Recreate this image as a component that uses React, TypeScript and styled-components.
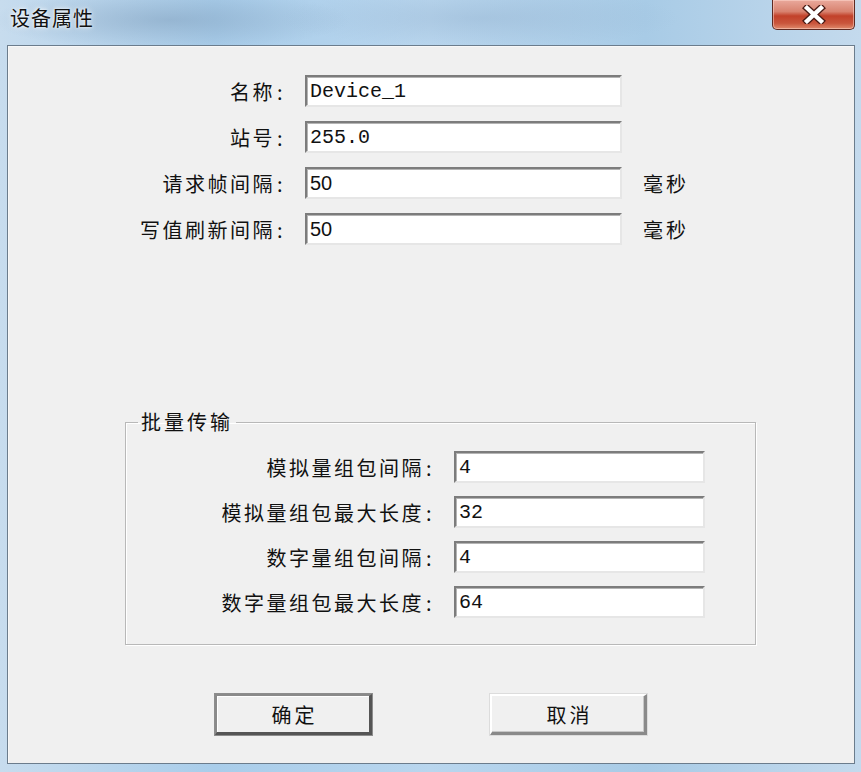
import React from "react";
import styled, { createGlobalStyle } from "styled-components";

const GlobalStyle = createGlobalStyle`
  html, body { margin: 0; padding: 0; }
  body {
    background: #b7d3ea;
    font-family: "Noto Sans CJK SC", "Noto Sans", sans-serif;
  }
`;

const WindowFrame = styled.div`
  width: 861px;
  height: 772px;
  box-sizing: border-box;
  display: flex;
  flex-direction: column;
  padding: 0 6px 8px 7px;
  background:
    radial-gradient(ellipse 180px 30px at 170px 20px, rgba(120, 150, 180, 0.45), transparent),
    radial-gradient(ellipse 200px 30px at 480px 18px, rgba(140, 170, 200, 0.35), transparent),
    linear-gradient(to right, #c7dcee 0%, #a9cdea 25%, #b9d6ee 50%, #a8cbe6 75%, #c4daed 100%);
`;

const TitleBar = styled.div`
  height: 45px;
  display: flex;
  align-items: flex-start;
  justify-content: space-between;
`;

const Title = styled.div`
  margin: 7px 0 0 3px;
  font-size: 20px;
  letter-spacing: 1px;
  line-height: 22px;
  color: #111;
  text-shadow: 0 0 6px rgba(255, 255, 255, 0.9), 0 0 3px rgba(255, 255, 255, 0.9);
`;

const CloseButton = styled.div`
  width: 83px;
  height: 30px;
  box-sizing: border-box;
  border: 1px solid #5e2a22;
  border-top: none;
  border-radius: 0 0 5px 5px;
  background: linear-gradient(to bottom, #e9a99c 0%, #d8826f 40%, #c2412a 55%, #c9553c 80%, #e08a6c 100%);
  box-shadow: inset 0 0 0 1px rgba(255, 220, 210, 0.5);
  display: flex;
  align-items: center;
  justify-content: center;
`;

const Client = styled.div`
  flex: 1;
  box-sizing: border-box;
  background: #f0f0f0;
  border: 1px solid #6b7c8c;
  box-shadow: inset 1px 1px 0 #f8f8f8;
  display: flex;
  flex-direction: column;
  padding: 29px 0 0 0;
`;

const TopForm = styled.div`
  display: flex;
  flex-direction: column;
  gap: 14px;
`;

const Row = styled.div`
  display: flex;
  align-items: center;
  height: 32px;
`;

const Label = styled.div<{ $w: number }>`
  width: ${(p) => p.$w}px;
  flex: none;
  text-align: right;
  font-size: 20px;
  letter-spacing: 2.5px;
  color: #111;
  white-space: nowrap;
`;

const Colon = styled.span`
  display: inline-block;
  width: 14px;
  text-align: left;
  padding-left: 2px;
  letter-spacing: 0;
  box-sizing: border-box;
`;

const TextBox = styled.div<{ $w: number; $font: string }>`
  width: ${(p) => p.$w}px;
  height: 32px;
  box-sizing: border-box;
  margin-left: 16px;
  background: #fff;
  border-top: 2px solid #7c7c7c;
  border-left: 2px solid #7c7c7c;
  border-right: 2px solid #e6e6e6;
  border-bottom: 2px solid #e6e6e6;
  box-shadow: inset 1px 1px 0 #b4b4b4;
  display: flex;
  align-items: center;
  padding-left: 3px;
  font-family: ${(p) => p.$font};
  font-size: 20px;
  color: #111;
`;

const Unit = styled.div`
  margin-left: 21px;
  font-size: 20px;
  letter-spacing: 3px;
  color: #111;
`;

const GroupBox = styled.fieldset`
  margin: 166px 0 0 117px;
  width: 631px;
  height: 234px;
  box-sizing: border-box;
  border: 1px solid #b8b8b8;
  box-shadow: 1px 1px 0 #fff, inset 1px 1px 0 #fff;
  padding: 0;
  display: flex;
  flex-direction: column;
`;

const Legend = styled.legend`
  margin-left: 12px;
  padding: 0 3px 0 3px;
  font-size: 20px;
  letter-spacing: 3px;
  line-height: 22px;
  color: #111;
`;

const GroupRows = styled.div`
  display: flex;
  flex-direction: column;
  gap: 13px;
  padding-top: 18px;
`;

const ButtonBar = styled.div`
  display: flex;
  margin: 49px 0 0 207px;
  gap: 118px;
`;

const Button = styled.div<{ $default?: boolean }>`
  width: 157px;
  height: 41px;
  box-sizing: border-box;
  display: flex;
  align-items: center;
  justify-content: center;
  padding-left: 3px;
  font-size: 20px;
  letter-spacing: 3px;
  color: #111;
  background: #f0f0f0;
  border-top: 2px solid ${(p) => (p.$default ? "#8a8a8a" : "#ffffff")};
  border-left: 2px solid ${(p) => (p.$default ? "#8a8a8a" : "#ffffff")};
  border-right: 3px solid ${(p) => (p.$default ? "#555" : "#8a8a8a")};
  border-bottom: 3px solid ${(p) => (p.$default ? "#555" : "#8a8a8a")};
  box-shadow: ${(p) =>
    p.$default
      ? "0 0 0 1px #8d8d8d, inset 1px 1px 0 #fff"
      : "inset -1px -1px 0 #c8c8c8, 0 0 0 1px #dcdcdc"};
`;

const MONO = `"Liberation Mono", "DejaVu Sans Mono", monospace`;
const SANS = `"Liberation Sans", Arial, sans-serif`;

const topRows = [
  { label: "名称", value: "Device_1", font: MONO, unit: false },
  { label: "站号", value: "255.0", font: MONO, unit: false },
  { label: "请求帧间隔", value: "50", font: SANS, unit: true },
  { label: "写值刷新间隔", value: "50", font: SANS, unit: true },
];

const groupRows = [
  { label: "模拟量组包间隔", value: "4" },
  { label: "模拟量组包最大长度", value: "32" },
  { label: "数字量组包间隔", value: "4" },
  { label: "数字量组包最大长度", value: "64" },
];

const CloseIcon = () => (
  <svg width="24" height="19" viewBox="0 0 24 19">
    <path d="M5 3 L19 16 M19 3 L5 16" stroke="#4a1a14" strokeWidth="7" strokeLinecap="square" />
    <path d="M5 3 L19 16 M19 3 L5 16" stroke="#ffffff" strokeWidth="4.4" strokeLinecap="square" />
  </svg>
);

export default function App() {
  return (
    <>
      <GlobalStyle />
      <WindowFrame>
        <TitleBar>
          <Title>设备属性</Title>
          <CloseButton>
            <CloseIcon />
          </CloseButton>
        </TitleBar>
        <Client>
          <TopForm>
            {topRows.map((r) => (
              <Row key={r.label}>
                <Label $w={281}>
                  {r.label}
                  <Colon>:</Colon>
                </Label>
                <TextBox $w={317} $font={r.font}>
                  {r.value}
                </TextBox>
                {r.unit && <Unit>毫秒</Unit>}
              </Row>
            ))}
          </TopForm>
          <GroupBox>
            <Legend>批量传输</Legend>
            <GroupRows>
              {groupRows.map((r) => (
                <Row key={r.label}>
                  <Label $w={312}>
                    {r.label}
                    <Colon>:</Colon>
                  </Label>
                  <TextBox $w={251} $font={MONO}>
                    {r.value}
                  </TextBox>
                </Row>
              ))}
            </GroupRows>
          </GroupBox>
          <ButtonBar>
            <Button $default>确定</Button>
            <Button>取消</Button>
          </ButtonBar>
        </Client>
      </WindowFrame>
    </>
  );
}
